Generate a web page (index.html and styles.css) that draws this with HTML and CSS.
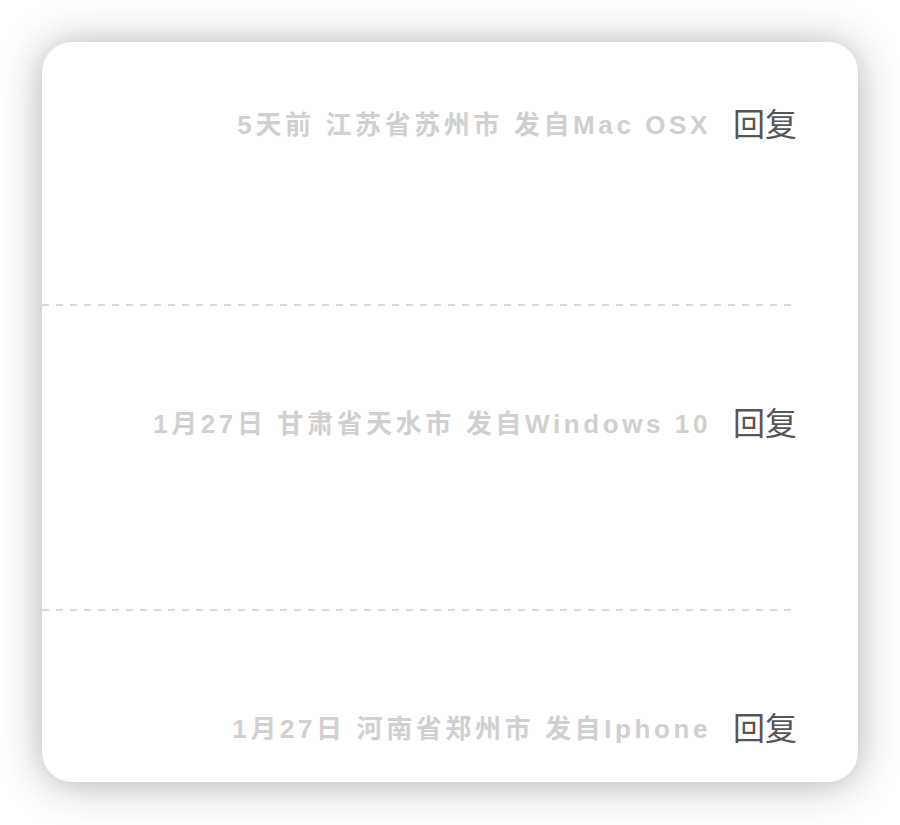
FILE: index.html
```html
<!DOCTYPE html>
<html lang="zh-CN">
<head>
  <meta charset="UTF-8" />
  <meta name="viewport" content="width=device-width, initial-scale=1.0"/>
  <title>评论</title>
  <link rel="stylesheet" href="styles.css">
</head>
<body>
  <div class="comment-card">
    <div class="comment">
      <div class="comment-meta">
        <span class="meta-info">5天前 江苏省苏州市 发自Mac OSX</span>
        <a class="reply-btn" href="#">回复</a>
      </div>
    </div>

    <div class="comment">
      <div class="comment-meta">
        <span class="meta-info">1月27日 甘肃省天水市 发自Windows 10</span>
        <a class="reply-btn" href="#">回复</a>
      </div>
    </div>

    <div class="comment">
      <div class="comment-meta">
        <span class="meta-info">1月27日 河南省郑州市 发自Iphone</span>
        <a class="reply-btn" href="#">回复</a>
      </div>
    </div>
  </div>
</body>
</html>
```

FILE: styles.css
```css
* {
  box-sizing: border-box;
  margin: 0;
  padding: 0;
}

body {
  font-family: 'Liberation Sans', 'Noto Sans CJK SC', sans-serif;
  background-color: #fff;
  padding: 42px;
  min-height: 100vh;
}

.comment-card {
  width: 816px;
  height: 740px;
  background: #fff;
  border-radius: 30px;
  box-shadow: 0 2px 42px rgba(0,0,0,0.32);
  overflow: hidden;
}

.comment {
  margin-right: 61px;
  padding: 95px 0 170px;
  /* dashed divider under each comment */
  background: linear-gradient(to right, #dadada 50%, transparent 50%) left bottom / 14px 2px repeat-x;
}

.comment:first-child {
  padding-top: 60px;
  padding-bottom: 164px;
}

.comment:last-child {
  padding-bottom: 36px;
  background: none;
}

.comment-meta {
  display: flex;
  justify-content: flex-end;
  align-items: center;
  height: 40px;
}

.meta-info {
  font-size: 26px;
  font-weight: bold;
  letter-spacing: 3.6px;
  color: #d0d0d0;
}

.reply-btn {
  margin-left: 22px;
  font-size: 32px;
  color: #555;
  text-decoration: none;
}
```
